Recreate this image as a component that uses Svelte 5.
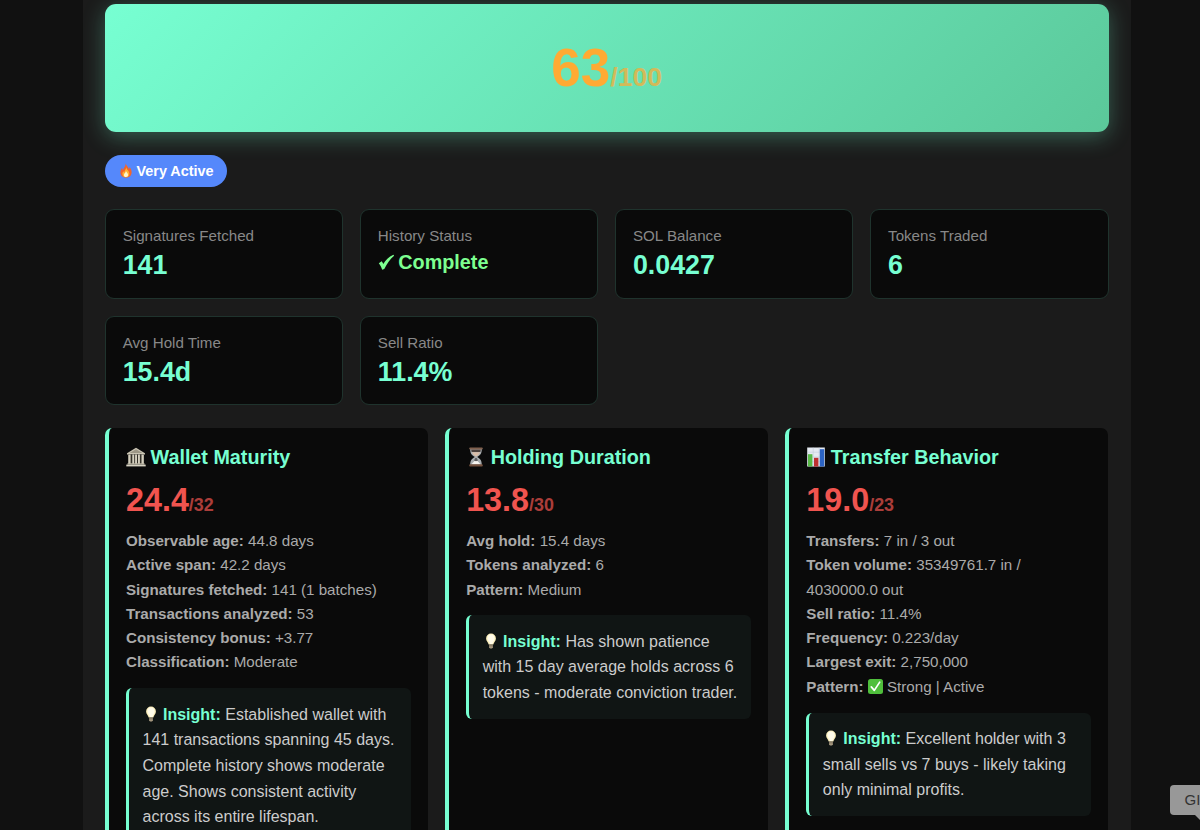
<script>
    /** Wallet report: total score, headline stats and one card per category */

    const score = { value: 63, max: 100 };

    const stats = [
        { label: 'Signatures Fetched', value: '141' },
        { label: 'History Status', value: 'Complete', complete: true },
        { label: 'SOL Balance', value: '0.0427' },
        { label: 'Tokens Traded', value: '6' },
        { label: 'Avg Hold Time', value: '15.4d' },
        { label: 'Sell Ratio', value: '11.4%' }
    ];

    const categories = [
        {
            icon: 'bank',
            title: 'Wallet Maturity',
            value: '24.4',
            max: 32,
            details: [
                { name: 'Observable age', text: '44.8 days' },
                { name: 'Active span', text: '42.2 days' },
                { name: 'Signatures fetched', text: '141 (1 batches)' },
                { name: 'Transactions analyzed', text: '53' },
                { name: 'Consistency bonus', text: '+3.77' },
                { name: 'Classification', text: 'Moderate' }
            ],
            insight: 'Established wallet with 141 transactions spanning 45 days. Complete history shows moderate age. Shows consistent activity across its entire lifespan.'
        },
        {
            icon: 'hourglass',
            title: 'Holding Duration',
            value: '13.8',
            max: 30,
            details: [
                { name: 'Avg hold', text: '15.4 days' },
                { name: 'Tokens analyzed', text: '6' },
                { name: 'Pattern', text: 'Medium' }
            ],
            insight: 'Has shown patience with 15 day average holds across 6 tokens - moderate conviction trader.'
        },
        {
            icon: 'chart',
            title: 'Transfer Behavior',
            value: '19.0',
            max: 23,
            details: [
                { name: 'Transfers', text: '7 in / 3 out' },
                { name: 'Token volume', text: '35349761.7 in / 4030000.0 out' },
                { name: 'Sell ratio', text: '11.4%' },
                { name: 'Frequency', text: '0.223/day' },
                { name: 'Largest exit', text: '2,750,000' },
                { name: 'Pattern', text: 'Strong | Active', check: true }
            ],
            insight: 'Excellent holder with 3 small sells vs 7 buys - likely taking only minimal profits.'
        }
    ];
</script>

{#snippet titleIcon(name)}
    <svg class="title-icon" viewBox="0 0 20 20" aria-hidden="true">
        {#if name === 'bank'}
            <path d="M1 6.2 10 .8l9 5.4v1.3H1z" fill="#c9c4b2" />
            <path d="M3.5 6 10 2.3 16.5 6z" fill="#9c9685" />
            <path d="M2 7.5h16V17H2z" fill="#35322a" />
            <path d="M2.3 7.5h2.3V17H2.3zM6.3 7.5h1.9V17H6.3zM9.1 7.5H11V17H9.1zM12 7.5h1.9V17H12zM15.5 7.5h2.3V17h-2.3z" fill="#d5d0bf" />
            <path d="M1.5 16.3h17v1.3h-17z" fill="#bcb7a5" />
            <path d="M.3 17.6h19.4v1.8H.3z" fill="#d8d3c3" />
        {:else if name === 'hourglass'}
            <path d="M4.2 2h11.6c0 4.5-1.3 5.900-4.600 8 3.300 2.100 4.600 3.500 4.600 8H4.200c0-4.500 1.300-5.900 4.600-8C5.500 7.900 4.200 6.500 4.200 2z" fill="#a9adb0" />
            <path d="M5.200 2.500h9.600l-.4 2.400H5.600z" fill="#4b403c" />
            <path d="M5.800 5.200h8.400c-.8 2-2.200 3-4.200 4.400C8 8.200 6.600 7.200 5.800 5.200z" fill="#d9bda8" />
            <path d="M9.500 10h1v3l4 4.200h-9l4-4.200z" fill="#f7f5f1" />
            <path d="M8 13.500 9.500 10.500h1l1.500 3-2 .8z" fill="#5b5b5d" />
            <rect x="3.200" y=".4" width="13.600" height="2" rx=".9" fill="#80604e" />
            <rect x="3.200" y="17.300" width="13.600" height="2.200" rx=".9" fill="#74513e" />
        {:else}
            <rect x="1.200" y=".5" width="17.600" height="19" fill="#e5eaf1" />
            <path d="M1.200 5.200h17.600M1.200 10h17.600M1.200 14.700h17.600M7.200.5v19M13.200.5v19" stroke="#bdc7d4" stroke-width=".5" />
            <rect x="2" y="7.200" width="4.400" height="12.300" fill="#58b947" />
            <rect x="8" y="10.800" width="4.400" height="8.700" fill="#bf3030" />
            <rect x="13.800" y="2.200" width="4.400" height="17.300" fill="#2c63c4" />
        {/if}
    </svg>
{/snippet}

<div class="report">
    <section class="score-hero">
        <span class="score-value">{score.value}</span><span class="score-max">/{score.max}</span>
    </section>

    <div class="badge">
        <svg class="flame" viewBox="0 0 14 16" aria-hidden="true">
            <path d="M6.700.5c.6 2.300 2.800 3.700 3.500 6 .5-.7.700-1.400.6-2.200 1.400 1.700 2.200 3.500 2.200 5.500 0 3.500-2.500 5.700-6 5.700S1 13.300 1 10c0-2.200.9-3.500 1.800-5 .1 1.200.4 1.900 1 2.600C4.300 4.900 6.900 3.500 6.700.5z" fill="#f4652a" />
            <path d="M7.200 4.500c.3 2.200 3.400 3.900 3.400 7 0 2.200-1.500 3.700-3.700 3.700s-3.700-1.500-3.700-3.600c0-1.200.6-2 1.200-2.700.1.800.4 1.200.8 1.500C5.200 8 7.200 7 7.200 4.500z" fill="#ffb431" />
            <path d="M7 8.500c.4 1.500 2.200 2.400 2.200 4.100 0 1.500-.9 2.400-2.200 2.400s-2.200-.9-2.200-2.300C4.800 11 6.700 10.400 7 8.500z" fill="#fff5c9" />
        </svg>
        <span>Very Active</span>
    </div>

    <section class="stats">
        {#each stats as stat}
            <div class="stat">
                <div class="stat-label">{stat.label}</div>
                {#if stat.complete}
                    <div class="stat-value complete">
                        <svg class="tick" viewBox="0 0 17 17" aria-hidden="true">
                            <path d="M.8 9.300 3.700 7.200c.8 1 1.300 1.900 1.600 2.900C7.600 6.300 10.600 3 15.400.8l.7.9C11.900 5.300 8.900 9.600 6.300 15l-2.100.8C3.400 13.300 2.300 11.200.8 9.300z" fill="currentColor" />
                        </svg>
                        <span>{stat.value}</span>
                    </div>
                {:else}
                    <div class="stat-value">{stat.value}</div>
                {/if}
            </div>
        {/each}
    </section>

    <section class="categories">
        {#each categories as category}
            <article class="category">
                <h3>{@render titleIcon(category.icon)}<span>{category.title}</span></h3>
                <div class="category-score">{category.value}<span>/{category.max}</span></div>
                <div class="details">
                    {#each category.details as detail}
                        <div>
                            <strong>{detail.name}:</strong>
                            {#if detail.check}
                                <svg class="check" viewBox="0 0 15 15" aria-hidden="true">
                                    <rect width="15" height="15" rx="2.500" fill="#4fbf3c" />
                                    <path d="m3.300 7.900 3 3.500 5.400-8.300" fill="none" stroke="#fff" stroke-width="1.700" stroke-linecap="round" stroke-linejoin="round" />
                                </svg>
                            {/if}
                            {detail.text}
                        </div>
                    {/each}
                </div>
                <div class="insight">
                    <svg class="bulb" viewBox="0 0 16 16" aria-hidden="true">
                        <path d="M8 .5a4.900 4.900 0 0 1 4.900 4.900c0 2.500-2 3.500-2.600 6.100H5.700C5.100 8.900 3.100 7.900 3.100 5.400A4.900 4.900 0 0 1 8 .5z" fill="#fdf0bd" />
                        <path d="M8 1.500a3.800 3.800 0 0 1 3.500 3.900c0 2-1.600 3.300-2 5.600H7C6.600 8.700 4.500 7.400 4.500 5.400A3.800 3.800 0 0 1 8 1.500z" fill="#fffbe9" />
                        <path d="M6.100 11.500h3.800v2.700L9 15.500H7l-.9-1.300z" fill="#a5977e" />
                        <path d="M6.100 12.800h3.800" stroke="#65594b" stroke-width=".6" />
                    </svg>
                    <strong>Insight:</strong>
                    {category.insight}
                </div>
            </article>
        {/each}
    </section>
</div>

<div class="side-tag">GI</div>

<style>
    :global(body) {
        height: 830px;
        overflow: hidden;
        background: #111;
        font-family: "Liberation Sans", Arial, sans-serif;
    }

    .report {
        width: 1003.5px;
        height: 826px;
        margin-left: 82.5px;
        padding: 4px 22.5px 0;
        background: #1b1b1b;
    }

    .score-hero {
        height: 128px;
        display: flex;
        align-items: baseline;
        justify-content: center;
        border-radius: 11px;
        background: linear-gradient(135deg, #77ffd2 0%, #5bc89a 100%);
        box-shadow: 0 4.5px 22.5px rgba(119, 255, 210, 0.3);
        color: #ffaa33;
        font-weight: bold;
        line-height: 128px;
    }

    .score-value {
        font-size: 53px;
    }

    .score-max {
        font-size: 26.7px;
        opacity: 0.7;
    }

    .badge {
        display: flex;
        align-items: center;
        gap: 4px;
        width: fit-content;
        height: 32px;
        box-sizing: border-box;
        margin-top: 22.5px;
        padding: 0 13.5px;
        border-radius: 16px;
        background: #5588fb;
        color: #fff;
        font-size: 14.4px;
        font-weight: bold;
    }

    .flame {
        width: 14px;
        height: 15px;
    }

    .stats {
        display: grid;
        grid-template-columns: repeat(4, 1fr);
        gap: 17px;
        margin-top: 22.5px;
    }

    .stat {
        height: 89.5px;
        box-sizing: border-box;
        padding: 17px 16.7px 0;
        border: 1px solid #1f332d;
        border-radius: 9px;
        background: #0a0a0a;
    }

    .stat-label {
        color: #888;
        font-size: 15.15px;
        line-height: 18px;
    }

    .stat-value {
        margin-top: 5px;
        color: #77ffd2;
        font-size: 26.8px;
        font-weight: bold;
        line-height: 31px;
    }

    .stat-value.complete {
        display: flex;
        align-items: center;
        gap: 3.5px;
        color: #7dff90;
        font-size: 19.8px;
        line-height: 25px;
    }

    .tick {
        width: 17px;
        height: 17px;
    }

    .categories {
        display: grid;
        grid-template-columns: repeat(3, 1fr);
        gap: 17px;
        height: 440px;
        margin-top: 22.5px;
    }

    .category {
        padding: 17px 17px 0;
        border-left: 4.5px solid #77ffd2;
        border-radius: 7px;
        background: #0a0a0a;
    }

    h3 {
        display: flex;
        align-items: center;
        gap: 4.5px;
        margin: 0;
        color: #77ffd2;
        font-size: 19.75px;
        line-height: 24px;
    }

    .title-icon {
        width: 20px;
        height: 20px;
    }

    .category-score {
        margin-top: 12px;
        color: #f0544f;
        font-size: 32.3px;
        font-weight: bold;
        line-height: 38px;
    }

    .category-score span {
        font-size: 17.9px;
        opacity: 0.7;
    }

    .details {
        margin-top: 5.5px;
        color: #aaa;
        font-size: 15.15px;
        line-height: 24.3px;
    }

    .check {
        width: 15px;
        height: 15px;
        vertical-align: -2px;
    }

    .insight {
        margin-top: 13.5px;
        padding: 13.5px;
        border-left: 3.4px solid #77ffd2;
        border-radius: 6px;
        background: #101514;
        color: #ccc;
        font-size: 16.03px;
        line-height: 25.6px;
    }

    .insight strong {
        color: #77ffd2;
    }

    .bulb {
        width: 16px;
        height: 16px;
        vertical-align: -2px;
    }

    /* floating label that runs off the right edge of the window */
    .side-tag {
        position: absolute;
        top: 785px;
        right: 0;
        width: 30px;
        height: 30px;
        box-sizing: border-box;
        padding-left: 14.5px;
        border-radius: 4px 0 0 4px;
        background: #989898;
        color: #333;
        font-size: 15px;
        line-height: 30px;
    }

    .side-tag::after {
        content: "";
        position: absolute;
        top: 30px;
        right: 0;
        border-top: 5px solid #989898;
        border-left: 5px solid transparent;
    }
</style>
